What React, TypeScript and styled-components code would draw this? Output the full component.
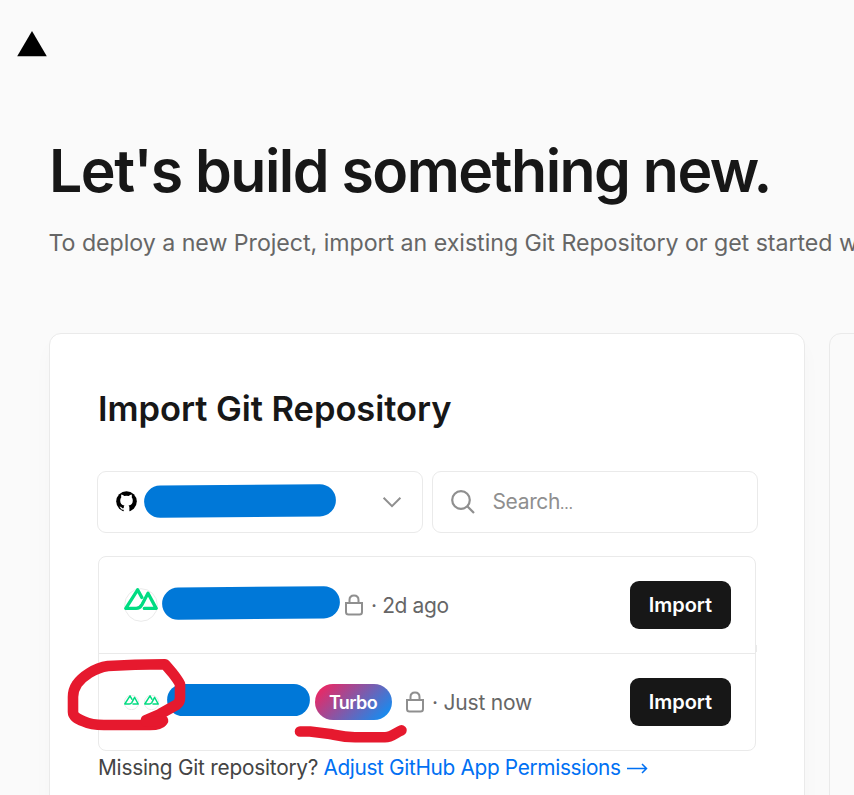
import React from "react";
import styled, { createGlobalStyle } from "styled-components";

const GlobalStyle = createGlobalStyle`
  *, *::before, *::after { box-sizing: border-box; }
  body {
    margin: 0;
    background: #fafafa;
    color: #171717;
    font-family: Inter, "Liberation Sans", sans-serif;
    overflow: hidden;
  }
`;

const Page = styled.div`
  position: relative;
  width: 100%;
  height: 795px;
  overflow: hidden;
`;

const Header = styled.header`
  height: 88px;
  padding: 30px 17px 0;

  svg { display: block; }
`;

const Intro = styled.section`
  padding-left: 49px;
  white-space: nowrap;
`;

const Title = styled.h1`
  margin: 48px 0 0;
  font-size: 59px;
  line-height: 70px;
  font-weight: 600;
  letter-spacing: -1.53px;
`;

const Subtitle = styled.p`
  margin: 19px 0 0 -0.5px;
  font-size: 23.2px;
  line-height: 36px;
  color: #666;
  letter-spacing: -0.04px;
`;

const Columns = styled.main`
  display: flex;
  gap: 24px;
  margin: 72px 0 0 49px;
  width: 1200px;
  height: 520px;
`;

const Card = styled.section`
  width: 756px;
  padding: 48px 47px 0;
  border: 1px solid #eaeaea;
  border-radius: 12px;
  background: #fff;
  box-shadow: 0 12px 20px rgba(0, 0, 0, 0.025);
`;

const SideCard = styled.aside`
  flex: 1;
  border: 1px solid #eaeaea;
  border-radius: 12px;
`;

const CardTitle = styled.h2`
  margin: 4px 0 0 1px;
  font-size: 34.5px;
  line-height: 46px;
  font-weight: 600;
  letter-spacing: -0.05px;
  white-space: nowrap;
`;

const Controls = styled.div`
  display: flex;
  gap: 9px;
  margin: 38.5px 0 0 -0.5px;
  width: 661px;
`;

const Field = styled.div`
  display: flex;
  align-items: center;
  flex: 1;
  height: 62.5px;
  padding: 0 18px;
  border: 1.5px solid #eaeaea;
  border-radius: 9px;
  background: #fff;
  color: #8f8f8f;
`;

const Account = styled(Field)`
  color: #000;

  > svg:last-child { margin: 0 1px 0 auto; }
`;

const Placeholder = styled.span`
  margin-left: 18px;
  font-size: 21px;
  letter-spacing: -0.35px;
`;

const Ellipsis = styled.span`
  font-size: 15px;
`;

const RepoList = styled.ul`
  list-style: none;
  margin: 23px 0 0 1px;
  padding: 0;
  width: 658px;
  border: 1px solid #eaeaea;
  border-radius: 8px;
`;

const Repo = styled.li`
  display: flex;
  align-items: center;
  height: 96px;
  padding: 0 24px 0 25px;

  & + & {
    height: 97px;
    border-top: 1px solid #eaeaea;
  }
`;

const Avatar = styled.svg<{ $gap?: number }>`
  display: block;
  flex: none;
  margin-right: ${(p) => p.$gap ?? 0}px;
`;

const Redaction = styled.svg<{ $left?: number; $lift: number }>`
  display: block;
  flex: none;
  margin-left: ${(p) => p.$left ?? 0}px;
  margin-bottom: ${(p) => p.$lift}px;
`;

const Badge = styled.span`
  display: flex;
  align-items: center;
  justify-content: center;
  width: 77px;
  height: 36px;
  margin: 0 13px 0 5px;
  padding-right: 1px;
  border-radius: 18px;
  background: linear-gradient(135deg, #ff1e56 0%, #0096ff 100%);
  color: #fff;
  font-size: 18px;
  font-weight: 600;
  letter-spacing: -0.6px;
`;

const Lock = styled.svg<{ $left?: number }>`
  display: block;
  flex: none;
  margin-left: ${(p) => p.$left ?? 0}px;
`;

const Age = styled.span<{ $spacing: number }>`
  margin-left: 7px;
  color: #666;
  font-size: 21px;
  letter-spacing: ${(p) => p.$spacing}px;
  white-space: nowrap;
`;

const ImportButton = styled.button`
  width: 101px;
  height: 48px;
  margin-left: auto;
  padding: 0;
  border: 0;
  border-radius: 9px;
  background: #171717;
  color: #fff;
  font: 600 20px/48px Inter, sans-serif;
  letter-spacing: -0.05px;
`;

const Help = styled.p`
  margin: 3px 0 0 1px;
  color: #444;
  font-size: 20.8px;
  line-height: 28px;
  letter-spacing: -0.22px;
  white-space: nowrap;
`;

const HelpLink = styled.a`
  display: inline-flex;
  align-items: center;
  gap: 6px;
  margin-left: -0.5px;
  color: #0070f3;
  letter-spacing: -0.33px;
`;

const Annotations = styled.svg`
  position: absolute;
  inset: 0;
  pointer-events: none;
`;

const GitHubMark = () => (
  <Avatar width="21" height="21" viewBox="0 0 21 21">
    <circle cx="10.5" cy="10.5" r="10.3" fill="#000" />
    <path
      d="M5.4 3.5Q7 3.7 8.3 4.9Q10.5 4.4 12.7 4.9Q14 3.7 15.6 3.5Q16.1 5 15.7 6.2Q16.8 7.5 16.8 9.4Q16.8 13.8 12.6 14.4Q13.4 15.2 13.4 16.5V21H7.7V18.7Q5.6 19.1 4.8 17.4Q4.4 16.4 3.3 15.8Q5 15.2 5.8 16.7Q6.5 17.6 7.7 17.1Q7.7 15.2 8.4 14.4Q4.2 13.8 4.2 9.4Q4.2 7.5 5.3 6.2Q4.9 5 5.4 3.5Z"
      fill="#fff"
    />
  </Avatar>
);

const NuxtAvatar = ({ size, gap }: { size: number; gap?: number }) => (
  <Avatar $gap={gap} width={size} height={size} viewBox="0 0 34 34" fill="none">
    <circle cx="17" cy="17" r="16.3" stroke="#eaeaea" strokeWidth={34 / size} />
    <path
      d="M17.8 9.4L13.6 1.8L1.8 20.4H12.2C15.4 20.4 16.6 18.9 18 16.6L24 5.2L32.2 20.4H20.3"
      stroke="#00dc82"
      strokeWidth="3.3"
      strokeLinejoin="round"
      strokeLinecap="round"
    />
  </Avatar>
);

interface BlueMarkProps {
  width: number;
  slant: number;
  lift: number;
  left?: number;
}

const BlueMark = ({ width, slant, lift, left }: BlueMarkProps) => (
  <Redaction $left={left} $lift={lift} width={width} height="34" viewBox={`0 0 ${width} 34`}>
    <path
      d={`M16.2 ${17 + slant / 2}L${width - 16.2} ${17 - slant / 2}`}
      stroke="#0078d8"
      strokeWidth="32.2"
      strokeLinecap="round"
    />
  </Redaction>
);

const LockIcon = ({ left }: { left?: number }) => (
  <Lock $left={left} width="20" height="22" viewBox="0 0 20 22" fill="none" stroke="#8f8f8f" strokeWidth="2">
    <path d="M2 9H18V18Q18 20.5 15.5 20.5H4.5Q2 20.5 2 18ZM5.5 9V6Q5.5 1.5 10 1.5Q14.5 1.5 14.5 6V9" />
  </Lock>
);

export default function App() {
  return (
    <>
      <GlobalStyle />
      <Page>
        <Header>
          <svg width="30" height="27" viewBox="0 0 30 27">
            <path d="M15 1L29.8 26.2H0.2Z" fill="#000" />
          </svg>
        </Header>
        <Intro>
          <Title>Let's build something new.</Title>
          <Subtitle>
            To deploy a new Project, import an existing Git Repository or get started w
          </Subtitle>
        </Intro>
        <Columns>
          <Card>
            <CardTitle>Import Git Repository</CardTitle>
            <Controls>
              <Account>
                <GitHubMark />
                <BlueMark width={192} slant={1.4} lift={1} left={7} />
                <svg width="22" height="22" viewBox="0 0 22 22" fill="none" stroke="#8f8f8f" strokeWidth="2">
                  <path d="M2.6 6.8L11 15.2L19.4 6.8" />
                </svg>
              </Account>
              <Field>
                <svg width="24" height="24" viewBox="0 0 24 24" fill="none" stroke="#8f8f8f" strokeWidth="2.2">
                  <circle cx="10" cy="10" r="8.8" />
                  <path d="M16.3 16.3L23 23" />
                </svg>
                <Placeholder>
                  Search<Ellipsis>…</Ellipsis>
                </Placeholder>
              </Field>
            </Controls>
            <RepoList>
              <Repo>
                <NuxtAvatar size={34} gap={4} />
                <BlueMark width={178} slant={1.4} lift={4} />
                <LockIcon left={4} />
                <Age $spacing={-0.4}>· 2d ago</Age>
                <ImportButton>Import</ImportButton>
              </Repo>
              <Repo>
                <NuxtAvatar size={15} gap={5} />
                <NuxtAvatar size={15} gap={8} />
                <BlueMark width={143} slant={0} lift={4} />
                <Badge>Turbo</Badge>
                <LockIcon />
                <Age $spacing={-0.2}>· Just now</Age>
                <ImportButton>Import</ImportButton>
              </Repo>
            </RepoList>
            <Help>
              Missing Git repository?{" "}
              <HelpLink>
                Adjust GitHub App Permissions
                <svg width="21" height="14" viewBox="0 0 21 14" fill="none" stroke="currentColor" strokeWidth="1.5">
                  <path d="M0 7.5H19.5M15 3L19.5 7.5L15 12" />
                </svg>
              </HelpLink>
            </Help>
          </Card>
          <SideCard />
        </Columns>
        <Annotations width="854" height="795" viewBox="0 0 854 795" fill="none">
          <path d="M756.5 645V652" stroke="#eaeaea" />
          <g stroke="#e6192e" strokeWidth="10.6" strokeLinecap="round" strokeLinejoin="round">
            <path d="M165 664.3L135 664.8L108 666C94 668 82 677 77 684Q73 690 73 697V712C73 717 78 719 84 721.5C90 724.5 97 725 104 725H150Q160 725 163 720.5L146 720L160 714L177 704.5Q180 702 180 698V684Q178 680 172.5 673L165 664.3Z" />
            <path d="M146 721.5H162" />
            <path d="M300 731.5H310L330 734C340 736 344 737.2 355 737.2H385C392 737.2 395 733 401.5 730.3" />
          </g>
        </Annotations>
      </Page>
    </>
  );
}
